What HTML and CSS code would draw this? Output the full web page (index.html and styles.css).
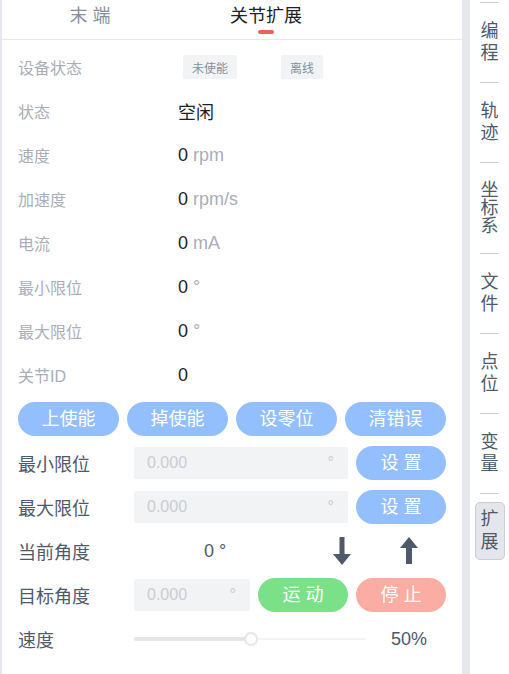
FILE: index.html
```html
<!DOCTYPE html>
<html lang="zh-CN">
<head>
<meta charset="utf-8">
<title>关节扩展</title>
<link rel="stylesheet" href="styles.css">
</head>
<body>
<div class="app">
  <main class="panel">
    <div class="tabs">
      <div class="tab">末 端</div>
      <div class="tab active">关节扩展</div>
    </div>

    <div class="info">
      <div class="info-row"><span class="info-label">设备状态</span><span class="info-value"><span class="tag">未使能</span><span class="tag tag-gap">离线</span></span></div>
      <div class="info-row"><span class="info-label">状态</span><span class="info-value">空闲</span></div>
      <div class="info-row"><span class="info-label">速度</span><span class="info-value">0&nbsp;<span class="unit">rpm</span></span></div>
      <div class="info-row"><span class="info-label">加速度</span><span class="info-value">0&nbsp;<span class="unit">rpm/s</span></span></div>
      <div class="info-row"><span class="info-label">电流</span><span class="info-value">0&nbsp;<span class="unit">mA</span></span></div>
      <div class="info-row"><span class="info-label">最小限位</span><span class="info-value">0&nbsp;<span class="unit">°</span></span></div>
      <div class="info-row"><span class="info-label">最大限位</span><span class="info-value">0&nbsp;<span class="unit">°</span></span></div>
      <div class="info-row"><span class="info-label">关节ID</span><span class="info-value">0</span></div>
    </div>

    <div class="actions">
      <button class="pill blue wide">上使能</button>
      <button class="pill blue wide">掉使能</button>
      <button class="pill blue wide">设零位</button>
      <button class="pill blue wide">清错误</button>
    </div>

    <div class="form-row">
      <span class="form-label">最小限位</span>
      <div class="field"><span>0.000</span><span>°</span></div>
      <button class="pill blue narrow">设 置</button>
    </div>
    <div class="form-row">
      <span class="form-label">最大限位</span>
      <div class="field"><span>0.000</span><span>°</span></div>
      <button class="pill blue narrow">设 置</button>
    </div>
    <div class="form-row">
      <span class="form-label">当前角度</span>
      <span class="cur-value">0 °</span>
      <svg class="arrow arrow-down" width="18" height="28" viewBox="0 0 18 28"><path d="M6.5 0h5v17h6.5L9 28 0 17h6.5z" fill="#4e5969"/></svg>
      <svg class="arrow arrow-up" width="18" height="28" viewBox="0 0 18 28"><path d="M9 0l9 11h-6v16h-6V11H0z" fill="#4e5969"/></svg>
    </div>
    <div class="form-row">
      <span class="form-label">目标角度</span>
      <div class="field short"><span>0.000</span><span>°</span></div>
      <button class="pill green narrow">运 动</button>
      <button class="pill red narrow">停 止</button>
    </div>
    <div class="form-row">
      <span class="form-label">速度</span>
      <div class="slider">
        <span class="slider-fill"></span>
        <span class="slider-knob"></span>
        <span class="slider-rest"></span>
      </div>
      <span class="percent">50%</span>
    </div>
  </main>

  <aside class="side">
    <span class="side-sep"></span>
    <div class="side-item">编程</div>
    <span class="side-sep"></span>
    <div class="side-item">轨迹</div>
    <span class="side-sep"></span>
    <div class="side-item tight">坐标系</div>
    <span class="side-sep"></span>
    <div class="side-item">文件</div>
    <span class="side-sep"></span>
    <div class="side-item">点位</div>
    <span class="side-sep"></span>
    <div class="side-item">变量</div>
    <span class="side-sep"></span>
    <div class="side-item active">扩展</div>
  </aside>
</div>
</body>
</html>
```

FILE: styles.css
```css
html, body {
  margin: 0;
  padding: 0;
}

body {
  background: #e6e7ec;
  font-family: "Liberation Sans", "Noto Sans CJK SC", sans-serif;
  color: #1d2129;
  overflow: hidden;
}

.app {
  display: flex;
  height: 674px;
  padding-left: 2px;
  gap: 8px;
}

.panel {
  width: 460px;
  height: 674px;
  background: #fff;
}

/* tabs */
.tabs {
  display: flex;
  height: 39px;
  border-bottom: 1px solid #e5e6eb;
}

.tab {
  position: relative;
  width: 176px;
  padding-top: 6px;
  text-align: center;
  font-size: 18px;
  line-height: 20px;
  color: #86909c;
}

.tab.active {
  color: #1d2129;
}

.tab.active::after {
  content: "";
  position: absolute;
  left: 80px;
  top: 30px;
  width: 16px;
  height: 4px;
  border-radius: 2px;
  background: #f0605a;
}

/* info list */
.info {
  padding-top: 5px;
}

.info-row {
  display: flex;
  align-items: center;
  height: 44px;
  padding-left: 16px;
}

.info-label {
  width: 160px;
  font-size: 16px;
  color: #a9aeb8;
}

.info-value {
  display: flex;
  align-items: center;
  font-size: 18px;
  color: #1d2129;
}

.unit {
  color: #a9aeb8;
}

.tag {
  display: inline-flex;
  align-items: center;
  height: 24px;
  padding: 0 9px;
  margin-left: 5px;
  background: #f2f3f5;
  border-radius: 2px;
  font-size: 12px;
  color: #86909c;
}

.tag-gap {
  margin-left: 44px;
}

/* buttons */
.actions {
  display: flex;
  gap: 8px;
  padding: 5px 0 5px 16px;
}

.pill {
  height: 34px;
  border: 0;
  padding: 0;
  border-radius: 17px;
  color: #fff;
  font-family: inherit;
  font-size: 18px;
  line-height: 34px;
}

.pill.blue { background: #94bfff; }
.pill.green { background: #7be188; }
.pill.red { background: #fbaca3; }

.pill.wide { width: 101px; }
.pill.narrow { width: 90px; }

/* form rows */
.form-row {
  display: flex;
  align-items: center;
  height: 44px;
  padding-left: 16px;
  gap: 8px;
}

.form-label {
  width: 108px;
  font-size: 18px;
  color: #4e5969;
}

.field {
  display: flex;
  align-items: center;
  justify-content: space-between;
  box-sizing: border-box;
  width: 214px;
  height: 32px;
  padding: 0 14px 0 13px;
  background: #f2f3f5;
  border-radius: 2px;
  font-size: 16px;
  color: #c9cdd4;
}

.field.short {
  width: 116px;
}

.cur-value {
  width: 116px;
  padding-left: 70px;
  box-sizing: border-box;
  font-size: 18px;
  color: #4e5969;
}

.arrow-down {
  margin-left: 75px;
}

.arrow-up {
  margin-left: 41px;
}

/* slider */
.slider {
  display: flex;
  align-items: center;
  width: 232px;
  height: 16px;
}

.slider-fill {
  width: 113px;
  height: 4px;
  border-radius: 2px;
  background: #e5e6eb;
}

.slider-knob {
  position: relative;
  z-index: 1;
  box-sizing: border-box;
  width: 14px;
  height: 14px;
  margin: 0 -3px;
  border: 2px solid #e5e6eb;
  border-radius: 50%;
  background: #fff;
}

.slider-rest {
  flex: 1;
  height: 2px;
  background: #f2f3f5;
}

.percent {
  width: 70px;
  text-align: center;
  font-size: 18px;
  color: #4e5969;
}

/* sidebar */
.side {
  display: flex;
  flex-direction: column;
  align-items: center;
  width: 39px;
  height: 674px;
  padding-top: 2px;
  box-sizing: border-box;
  background: #fff;
}

.side-sep {
  display: block;
  flex: none;
  width: 19px;
  height: 1px;
  background: #c9cdd4;
}

.side-item {
  width: 18px;
  padding: 18px 0;
  font-size: 18px;
  line-height: 21.5px;
  text-align: center;
  color: #4e5969;
}

.side-item.tight {
  line-height: 18px;
}

.side-item.active {
  width: 18px;
  margin-top: 8px;
  padding: 5px 5px;
  line-height: 23px;
  border: 1px solid #c9cdd4;
  border-radius: 5px;
  background: #e5e6eb;
}
```
